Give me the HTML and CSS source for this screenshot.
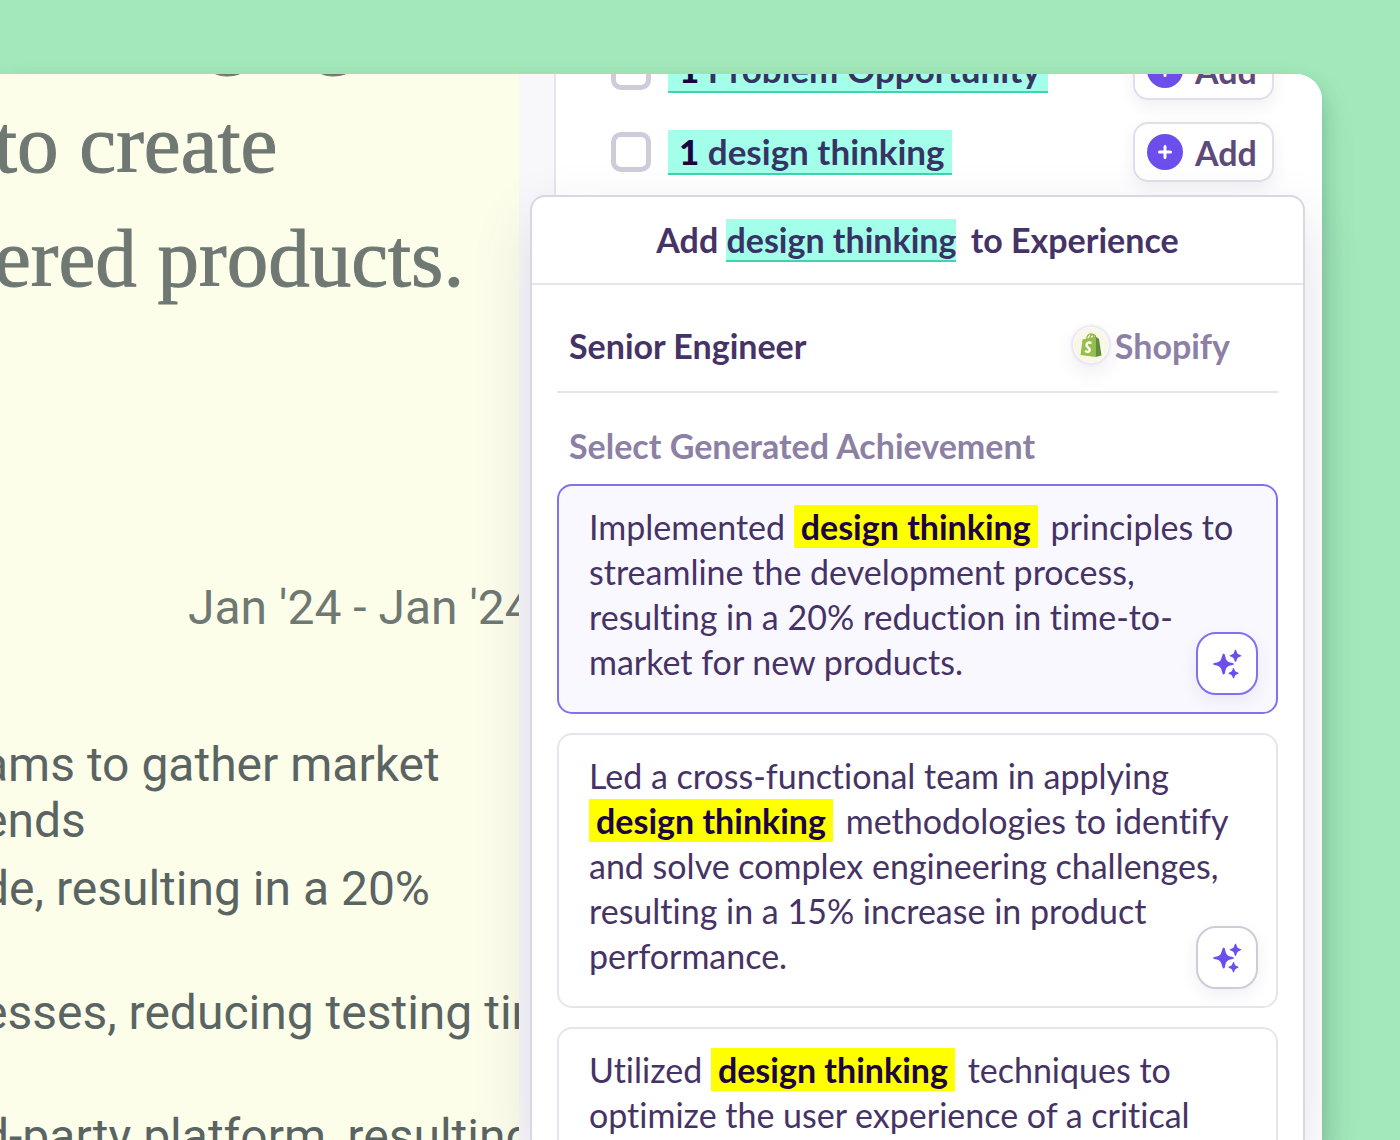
FILE: index.html
```html
<!DOCTYPE html>
<html lang="en">
<head>
  <meta charset="UTF-8">
  <meta name="viewport" content="width=device-width, initial-scale=1.0">
  <title>Add keyword to experience</title>
  <link rel="stylesheet" href="styles.css">
</head>
<body>
  <svg class="sprite" aria-hidden="true">
    <symbol id="plus" viewBox="0 0 36 36">
      <circle cx="18" cy="18" r="18" fill="#6b4eeb"/>
      <path d="M18 12.5v11M12.5 18h11" stroke="#fff" stroke-width="3" stroke-linecap="round"/>
    </symbol>
    <symbol id="sparkles" viewBox="0 0 30 30">
      <path d="M11.500 4.500Q13 4.500 13.300 7.500Q14 12.500 18 13.500Q22 14.200 22 15Q22 15.800 18 16.500Q14 17.500 13.300 22Q13 25.500 11.500 25.500Q10.500 25.500 9.800 22Q9 17.500 5 16.500Q1 15.800 1 15Q1 14.200 5 13.500Q9 12.500 9.800 8Q10.500 4.500 11.500 4.500Z"/>
      <path d="M23.500 0.500Q24.200 0.500 24.800 3Q25.200 5 27 5.500Q29.500 6.200 29.500 6.800Q29.500 7.400 27 8Q25.200 8.600 24.800 10.500Q24.200 13 23.500 13Q22.800 13 22.200 10.500Q21.800 8.600 20 8Q17.500 7.400 17.500 6.800Q17.500 6.200 20 5.500Q21.800 5 22.200 3Q22.800 0.500 23.500 0.500Z"/>
      <path d="M21.500 19Q22.200 19 22.600 21Q23 22.500 24.500 23Q26.500 23.500 26.500 24.200Q26.500 24.900 24.500 25.400Q23 25.900 22.600 27.500Q22.200 29.500 21.500 29.500Q20.800 29.500 20.400 27.500Q20 25.900 18.500 25.400Q16.500 24.900 16.500 24.200Q16.500 23.500 18.500 23Q20 22.500 20.400 21Q20.800 19 21.500 19Z"/>
    </symbol>
  </svg>

  <div class="app">
    <main class="resume">
      <div class="summary">
        <p>bringing</p>
        <p>to create</p>
        <p>ered products.</p>
      </div>
      <p class="dates">Jan '24 - Jan '24</p>
      <ul class="bullets">
        <li>ams to gather market<br>ends</li>
        <li>de, resulting in a 20%</li>
        <li>esses, reducing testing time</li>
        <li>d-party platform, resulting</li>
      </ul>
    </main>

    <aside class="side">
      <div class="keywords">
        <div class="keyword">
          <input type="checkbox" id="kw1">
          <label for="kw1"><b>1</b> Problem Opportunity</label>
          <button class="add" type="button"><svg><use href="#plus"/></svg>Add</button>
        </div>
        <div class="keyword">
          <input type="checkbox" id="kw2">
          <label for="kw2"><b>1</b> design thinking</label>
          <button class="add" type="button"><svg><use href="#plus"/></svg>Add</button>
        </div>
      </div>

      <section class="popover">
        <h2>Add <span class="term">design thinking</span> to Experience</h2>
        <div class="content">
          <div class="job">
            <span>Senior Engineer</span>
            <span class="company">
              <svg class="logo" viewBox="0 0 36 36" aria-hidden="true">
                <circle cx="18" cy="18" r="17.500" fill="#faf6ea"/>
                <path d="M13.500 12.500Q14 7 18 7Q20.500 7 21 11M16.500 12Q17.500 7.500 20 7.500Q23 8 22.500 11" fill="none" stroke="#95bf47" stroke-width="1.300"/>
                <path d="M9.500 12.500L22.500 9.500V30L7.500 28Z" fill="#95bf47"/>
                <path d="M22.500 9.500L26 12L28.500 28.500L22.500 30Z" fill="#5e8e3e"/>
                <path d="M18.500 16Q13.500 14.500 13.500 18C13.500 20.500 17 20.500 16.800 23.300Q16 26.200 12 24" fill="none" stroke="#fff" stroke-width="2.400"/>
              </svg>
              Shopify
            </span>
          </div>
          <h3>Select Generated Achievement</h3>
          <article class="card selected">
            <p>Implemented <mark>design thinking</mark> principles to streamline the development process, resulting in a 20% reduction in time-to-market for new products.</p>
            <button class="magic" type="button" aria-label="Regenerate"><svg><use href="#sparkles"/></svg></button>
          </article>
          <article class="card">
            <p>Led a cross-functional team in applying <mark>design thinking</mark> methodologies to identify and solve complex engineering challenges, resulting in a 15% increase in product performance.</p>
            <button class="magic" type="button" aria-label="Regenerate"><svg><use href="#sparkles"/></svg></button>
          </article>
          <article class="card">
            <p>Utilized <mark>design thinking</mark> techniques to optimize the user experience of a critical</p>
            <button class="magic" type="button" aria-label="Regenerate"><svg><use href="#sparkles"/></svg></button>
          </article>
        </div>
      </section>
    </aside>
  </div>
</body>
</html>
```
FILE: styles.css
```css
* {
  box-sizing: border-box;
}
body, p, ul, h2, h3 {
  margin: 0;
  padding: 0;
}
body {
  height: 100vh;
  overflow: hidden;
  padding: 74px 78px 0 0;
  background: #a2e8bb;
  font-family: Lato, "Liberation Sans", sans-serif;
  font-variant-ligatures: none;
  color: #463366;
}
button {
  font: inherit;
  cursor: pointer;
}
.sprite {
  position: absolute;
  width: 0;
  height: 0;
}
.app {
  display: grid;
  grid-template-columns: 519px 1fr;
  height: 100%;
  border-radius: 0 26px 0 0;
  box-shadow: 0 20px 36px rgba(30, 90, 60, .12), 0 12px 20px rgba(30, 90, 60, .24);
}

/* resume preview */
.resume {
  overflow: hidden;
  background: #fdfeea;
  font-family: Roboto, sans-serif;
  font-size: 48px;
  line-height: 56px;
  color: #5a6462;
  white-space: nowrap;
}
.summary {
  margin: -101px 0 0 -6px;
  font-family: "Liberation Serif", serif;
  font-size: 83px;
  line-height: 114px;
  color: #6f7873;
  -webkit-text-stroke: 1px #6f7873;
}
.summary p:first-child {
  padding-left: 80px;
}
.dates {
  margin: 265px 0 0 188px;
  color: #6f7873;
}
.bullets {
  margin: 101px 0 0 -18px;
  list-style: none;
}
.bullets li {
  margin-bottom: 68px;
}
.bullets li:first-child {
  margin-bottom: 12px;
}

/* keyword list */
.side {
  position: relative;
  min-width: 0;
  background: #f8f8fb;
  border-radius: 0 26px 0 0;
}
.keywords {
  height: 100%;
  margin-left: 35px;
  padding: 0 48px 0 55px;
  overflow: hidden;
  background: #fff;
  border-left: 2px solid #e6e4ee;
  border-radius: 0 26px 0 0;
}
.keyword {
  display: flex;
  align-items: center;
  height: 60px;
  margin-bottom: 22px;
}
.keyword:first-child {
  margin-top: -34px;
}
.keyword input {
  appearance: none;
  width: 40px;
  height: 40px;
  margin: 0 17px 0 0;
  border: 5px solid #cfccda;
  border-radius: 10px;
  background: #fff;
}
.keyword label {
  padding: 0 7px 0 11px;
  border-bottom: 2px solid #3dd4ae;
  background: #a4ffea;
  font-size: 35px;
  font-weight: 700;
  line-height: 43px;
  color: #373365;
}
.keyword b {
  font-weight: 900;
  color: #1c0443;
}
.add {
  display: flex;
  align-items: center;
  gap: 12px;
  width: 141px;
  height: 60px;
  margin-left: auto;
  padding: 0 12px;
  border: 2px solid #e0deea;
  border-radius: 15px;
  background: #fff;
  box-shadow: 0 6px 16px rgba(70, 51, 102, .08);
  font-size: 34px;
  font-weight: 700;
  color: #5d4a7b;
}
.add svg {
  width: 36px;
  height: 36px;
}

/* popover */
.popover {
  position: absolute;
  top: 121px;
  right: 17px;
  bottom: 0;
  left: 11px;
  border: 2px solid #d9d7e4;
  border-bottom: 0;
  border-radius: 15px 15px 0 0;
  background: #fff;
  box-shadow: 0 24px 60px rgba(50, 40, 100, .14);
}
.popover h2 {
  padding: 21px 0;
  border-bottom: 2px solid #e6e5ee;
  font-size: 34px;
  font-weight: 700;
  line-height: 44px;
  text-align: center;
}
.term {
  margin-right: 6px;
  border-bottom: 2px solid #3dd4ae;
  background: #a4ffea;
  color: #373365;
}
.content {
  padding: 0 25px;
}
.job {
  display: flex;
  align-items: center;
  justify-content: space-between;
  height: 108px;
  padding: 14px 48px 0 12px;
  border-bottom: 2px solid #e6e5ee;
  font-size: 34px;
  font-weight: 700;
}
.company {
  display: flex;
  align-items: center;
  gap: 6px;
  color: #8c80a5;
}
.logo {
  width: 36px;
  height: 36px;
  border-radius: 50%;
  box-shadow: 0 0 2px 2px #e9e6f2, 0 8px 20px rgba(70, 51, 102, .1);
}
.popover h3 {
  padding: 31px 12px 16px;
  font-size: 34px;
  font-weight: 700;
  line-height: 44px;
  color: #8c80a5;
}
.card {
  position: relative;
  min-height: 230px;
  margin-bottom: 19px;
  padding: 18px 30px 28px;
  border: 2px solid #e6e5ee;
  border-radius: 15px;
  font-size: 34px;
  line-height: 45px;
}
.card.selected {
  border-color: #8470ee;
  background: #f9f8ff;
}
.card mark {
  margin-right: 4px;
  padding: 1px 7px;
  background: #ff0;
  font-weight: 700;
  color: #1c0443;
}
.magic {
  position: absolute;
  right: 18px;
  bottom: 17px;
  display: grid;
  place-items: center;
  width: 62px;
  height: 63px;
  padding: 0;
  border: 2px solid #cfccda;
  border-radius: 20px;
  background: #fff;
  box-shadow: 0 6px 16px rgba(70, 51, 102, .08);
}
.selected .magic {
  border-color: #8470ee;
}
.magic svg {
  width: 30px;
  height: 30px;
  fill: #6b4eeb;
}
```
